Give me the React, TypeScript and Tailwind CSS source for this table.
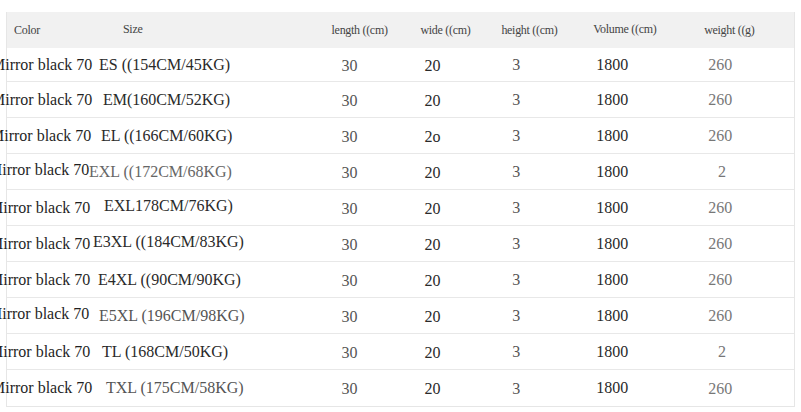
import React from 'react';

interface SizeRow {
  size: string;
  sizeGap: string;
  sizeTone: string;
  colorShift: string;
  wide: string;
  weight: string;
  weightPad: string;
}

const rows: SizeRow[] = [
  { size: 'ES ((154CM/45KG)', sizeGap: 'ml-[15px]', sizeTone: 'text-[#2a2a2a]', colorShift: '-ml-[16px]', wide: '20', weight: '260', weightPad: 'pl-[14px]' },
  { size: 'EM(160CM/52KG)', sizeGap: 'ml-[19px]', sizeTone: 'text-[#2a2a2a]', colorShift: '-ml-[16px]', wide: '20', weight: '260', weightPad: 'pl-[14px]' },
  { size: 'EL ((166CM/60KG)', sizeGap: 'ml-[18px]', sizeTone: 'text-[#2a2a2a]', colorShift: '-ml-[17px]', wide: '2o', weight: '260', weightPad: 'pl-[14px]' },
  { size: 'EXL ((172CM/68KG)', sizeGap: 'ml-[8px]', sizeTone: 'text-[#666]', colorShift: '-ml-[19px] -mt-[4px]', wide: '20', weight: '2', weightPad: 'pl-[24px]' },
  { size: 'EXL178CM/76KG)', sizeGap: 'ml-[22px] -mt-[3px]', sizeTone: 'text-[#2a2a2a]', colorShift: '-ml-[18px]', wide: '20', weight: '260', weightPad: 'pl-[14px]' },
  { size: 'E3XL ((184CM/83KG)', sizeGap: 'ml-[11px] -mt-[3px]', sizeTone: 'text-[#2a2a2a]', colorShift: '-ml-[18px]', wide: '20', weight: '260', weightPad: 'pl-[14px]' },
  { size: 'E4XL ((90CM/90KG)', sizeGap: 'ml-[16px]', sizeTone: 'text-[#2a2a2a]', colorShift: '-ml-[18px]', wide: '20', weight: '260', weightPad: 'pl-[14px]' },
  { size: 'E5XL (196CM/98KG)', sizeGap: 'ml-[18px]', sizeTone: 'text-[#555]', colorShift: '-ml-[19px] -mt-[4px]', wide: '20', weight: '260', weightPad: 'pl-[14px]' },
  { size: 'TL (168CM/50KG)', sizeGap: 'ml-[20px]', sizeTone: 'text-[#2a2a2a]', colorShift: '-ml-[18px]', wide: '20', weight: '2', weightPad: 'pl-[24px]' },
  { size: 'TXL (175CM/58KG)', sizeGap: 'ml-[22px]', sizeTone: 'text-[#555]', colorShift: '-ml-[16px]', wide: '20', weight: '260', weightPad: 'pl-[14px]' },
];

export default function App() {
  return (
    <div className="w-[801px] h-[412px] bg-white overflow-hidden pt-[12px] [font-family:'Liberation_Serif','Times_New_Roman',serif]">
      <div className="ml-[6px] w-[789px] border-l border-r border-b border-[#e6e6e6]">
        {/* header */}
        <div className="flex items-center h-[36px] bg-[#f1f1f1] text-[12px] text-[#444] tracking-[-0.3px]">
          <div className="flex items-center w-[323px]">
            <span className="ml-[7px] w-[109px]">Color</span>
            <span className="-mt-[3px]">Size</span>
          </div>
          <div className="w-[85px] pl-[2px]">length ((cm)</div>
          <div className="w-[82px] pl-[6px]">wide ((cm)</div>
          <div className="w-[88px] pl-[5px]">height ((cm)</div>
          <div className="w-[110px] pl-[9px] -mt-[3px]">Volume ((cm)</div>
          <div className="w-[100px] pl-[10px] -mt-[1px]">weight ((g)</div>
        </div>

        {/* rows */}
        {rows.map((row, i) => (
          <div
            key={i}
            className={`flex items-center text-[16px] ${i === 0 ? 'h-[34px]' : 'h-[36px]'} ${
              i < rows.length - 1 ? 'border-b border-[#e8e8e8]' : ''
            }`}
          >
            <div className="flex items-center w-[323px] whitespace-nowrap">
              <span className={`${row.colorShift} w-[93px] shrink-0 text-[#1f1f1f]`}>Mirror black 70</span>
              <span className={`${row.sizeGap} ${row.sizeTone}`}>{row.size}</span>
            </div>
            <div className="w-[85px] pl-[12px] text-[#555] mt-[2px]">30</div>
            <div className="w-[82px] pl-[10px] text-[#2a2a2a] mt-[2px]">{row.wide}</div>
            <div className="w-[88px] pl-[16px] text-[#555] mt-[1px]">3</div>
            <div className="w-[110px] pl-[12px] text-[#2a2a2a]">1800</div>
            <div className={`w-[100px] ${row.weightPad} text-[#777] mt-[1px]`}>{row.weight}</div>
          </div>
        ))}
      </div>
    </div>
  );
}
